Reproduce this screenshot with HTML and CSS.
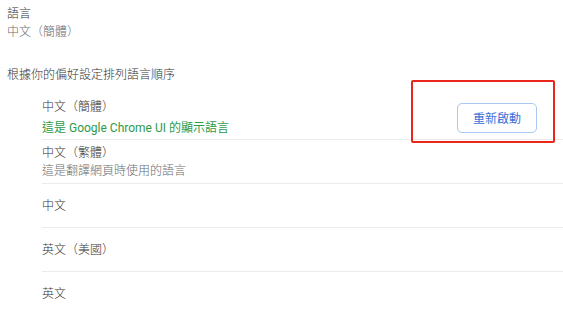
FILE: index.html
```html
<!DOCTYPE html>
<html lang="zh-TW">
<head>
<meta charset="utf-8">
<title>語言</title>
<link rel="stylesheet" href="styles.css">
</head>
<body>
<div class="page">
  <section class="summary">
    <div class="label">語言</div>
    <div class="value">中文（簡體）</div>
  </section>
  <div class="order-title">根據你的偏好設定排列語言順序</div>
  <ul class="lang-list">
    <li class="lang-row first">
      <div class="lang-text">
        <div class="lang-name">中文（簡體）</div>
        <div class="lang-note ui">這是 Google Chrome UI 的顯示語言</div>
      </div>
      <button class="restart">重新啟動</button>
    </li>
    <li class="lang-row">
      <div class="lang-text tight">
        <div class="lang-name">中文（繁體）</div>
        <div class="lang-note">這是翻譯網頁時使用的語言</div>
      </div>
    </li>
    <li class="lang-row"><div class="lang-name">中文</div></li>
    <li class="lang-row"><div class="lang-name">英文（美國）</div></li>
    <li class="lang-row"><div class="lang-name">英文</div></li>
  </ul>
  <div class="highlight"></div>
</div>
</body>
</html>
```
FILE: styles.css
```css
html, body {
  margin: 0;
  padding: 0;
  background: #ffffff;
}
body {
  font-family: Roboto, "Noto Sans CJK TC", sans-serif;
  font-size: 12px;
  font-weight: 300;
  color: #333333;
  overflow: hidden;
}
.page {
  position: relative;
  width: 563px;
  height: 310px;
}
.summary {
  padding: 5px 0 0 7px;
  line-height: 18px;
}
.summary .value {
  color: #6b6b6b;
}
.order-title {
  margin-top: 25px;
  padding-left: 7px;
  line-height: 18px;
}
.lang-list {
  list-style: none;
  margin: 12px 0 0 42px;
  padding: 0;
}
.lang-row {
  display: flex;
  align-items: center;
  min-height: 43px;
  border-bottom: 1px solid #ebebeb;
}
.lang-text {
  flex: 1;
  display: flex;
  flex-direction: column;
}
.lang-name {
  line-height: 18px;
}
.lang-note {
  line-height: 18px;
  margin-top: 3px;
  color: #6b6b6b;
}
.lang-note.ui {
  color: #2e9a47;
  font-weight: 400;
}
.tight .lang-name,
.tight .lang-note {
  line-height: 18px;
  margin-top: 0;
}
.restart {
  width: 80px;
  height: 30px;
  margin: 0 26px 0 0;
  border: 1px solid #aac6f2;
  border-radius: 5px;
  background: #ffffff;
  color: #3a6fd8;
  font-family: Roboto, "Noto Sans CJK TC", sans-serif;
  font-size: 12px;
  font-weight: 400;
  padding: 0;
}
.highlight {
  position: absolute;
  left: 411px;
  top: 80px;
  width: 140px;
  height: 59px;
  border: 2px solid #e8261c;
  border-radius: 2px;
}
```
